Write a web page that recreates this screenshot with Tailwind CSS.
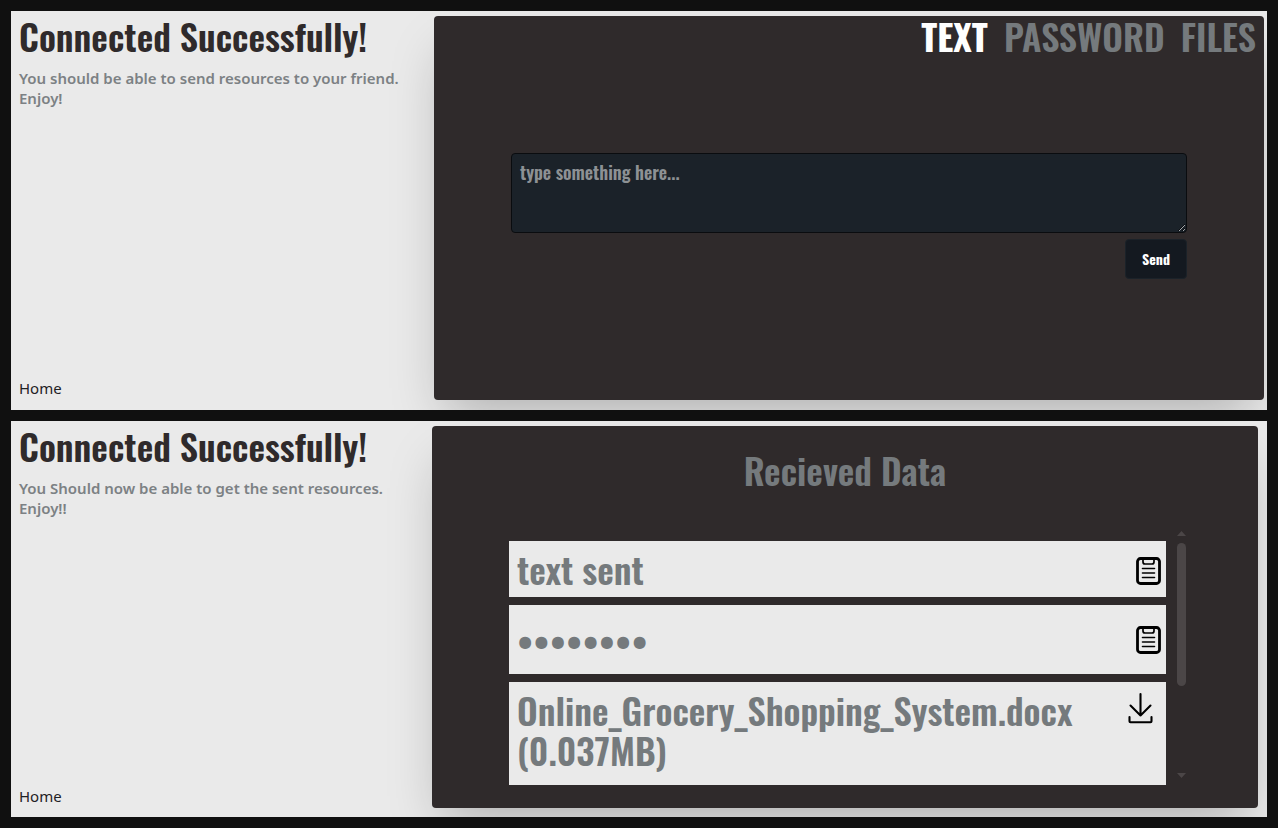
<!DOCTYPE html>
<html lang="en">
<head>
<meta charset="utf-8">
<meta name="viewport" content="width=device-width, initial-scale=1">
<title>Connected Successfully!</title>
<script src="https://cdn.jsdelivr.net/npm/@tailwindcss/browser@4"></script>
</head>
<body class="grid min-h-screen grid-rows-[399fr_396fr] gap-[11px] bg-[#101010] p-[11px] font-['Noto_Sans',sans-serif]">

<!-- Sender -->
<section class="grid grid-cols-[423fr_830fr] overflow-hidden bg-[#eaeaea] pt-[5px] pr-[3px] pb-[10px]">
  <div class="flex flex-col pl-2">
    <h1 class="font-['Oswald',sans-serif] text-4xl leading-10 font-semibold text-[#2f2a2b]">Connected Successfully!</h1>
    <p class="mt-3 text-[15px] leading-5 font-semibold text-[#7c8184]">You should be able to send resources to your friend.<br>Enjoy!</p>
    <a href="#" class="mt-auto self-start text-[15px] leading-6 text-[#1f2125]">Home</a>
  </div>
  <div class="flex flex-col rounded bg-[#2f2a2b] font-['Oswald',sans-serif] font-semibold shadow-2xl">
    <nav class="flex justify-end gap-4 px-2 text-4xl leading-10">
      <button type="button" class="font-bold text-white">TEXT</button>
      <button type="button" class="text-[#757a7d]">PASSWORD</button>
      <button type="button" class="text-[#757a7d]">FILES</button>
    </nav>
    <form class="flex flex-1 flex-col items-end px-[77px] pt-[97px]">
      <textarea aria-label="Text to send" placeholder="type something here..." class="block h-20 w-full rounded border border-[#0a0c0f] bg-[#1b2229] px-2 py-1 text-lg leading-7 text-white placeholder:text-[#8d9194]"></textarea>
      <button type="button" class="mt-1.5 h-10 rounded border border-[#1b2229] bg-[#141920] px-4 text-sm font-bold text-white">Send</button>
    </form>
  </div>
</section>

<!-- Receiver -->
<section class="grid grid-cols-[421fr_826fr] overflow-hidden bg-[#eaeaea] pt-[5px] pr-[9px] pb-[9px]">
  <div class="flex flex-col pl-2">
    <h1 class="font-['Oswald',sans-serif] text-4xl leading-10 font-semibold text-[#2f2a2b]">Connected Successfully!</h1>
    <p class="mt-3 text-[15px] leading-5 font-semibold text-[#7c8184]">You Should now be able to get the sent resources.<br>Enjoy!!</p>
    <a href="#" class="mt-auto self-start text-[15px] leading-6 text-[#1f2125]">Home</a>
  </div>
  <div class="flex flex-col rounded bg-[#2f2a2b] font-['Oswald',sans-serif] text-4xl leading-10 font-semibold text-[#757a7d] shadow-2xl">
    <h2 class="pt-6 text-center">Recieved Data</h2>
    <div class="mt-[39px] flex gap-2.5 pr-[72px] pl-[77px]">
      <ul class="flex flex-1 flex-col gap-2 pt-3">
        <li class="flex h-14 items-center justify-between bg-[#eaeaea] pr-[5px] pl-2">
          <span>text sent</span>
          <button type="button" aria-label="Copy text">
            <svg class="mt-1 block h-7 w-[25px]" viewBox="0 0 25 28" fill="none" stroke="#000" stroke-linecap="round"><rect x="1.5" y="1.5" width="22" height="25" rx="3" stroke-width="2.8"/><path d="M7 2v3a2 2 0 0 0 2 2h7a2 2 0 0 0 2-2V2" stroke-width="1.7"/><path d="M6.500 11.500h12M6.500 16h12M6.500 20.500h12" stroke-width="1.6"/></svg>
          </button>
        </li>
        <li class="flex h-[69px] items-center justify-between bg-[#eaeaea] pr-[5px] pl-2">
          <input type="password" readonly value="password" aria-label="Received password" class="w-60 bg-transparent">
          <button type="button" aria-label="Copy password">
            <svg class="block h-7 w-[25px]" viewBox="0 0 25 28" fill="none" stroke="#000" stroke-linecap="round"><rect x="1.5" y="1.5" width="22" height="25" rx="3" stroke-width="2.8"/><path d="M7 2v3a2 2 0 0 0 2 2h7a2 2 0 0 0 2-2V2" stroke-width="1.7"/><path d="M6.500 11.500h12M6.500 16h12M6.500 20.500h12" stroke-width="1.6"/></svg>
          </button>
        </li>
        <li class="flex items-start justify-between bg-[#eaeaea] pt-2 pr-[13px] pb-[15px] pl-2">
          <span>Online_Grocery_Shopping_System.docx<br>(0.037MB)</span>
          <button type="button" aria-label="Download file" class="pt-0.5">
            <svg class="block h-8 w-[25px]" viewBox="0 0 25 32" fill="none" stroke="#000" stroke-width="2.1" stroke-linecap="round" stroke-linejoin="round"><path d="M12.500 2v21.500M2.500 13.500l10 10 10-10M1.500 25v4.200q0 1 1 1h20q1 0 1-1V25"/></svg>
          </button>
        </li>
      </ul>
      <div class="flex w-2.5 flex-col items-center pb-[7px]" aria-hidden="true">
        <svg class="mt-0.5 h-[5px] w-[9px]" viewBox="0 0 9 5" fill="#4b4647"><path d="M0 5L4.500 0 9 5z"/></svg>
        <div class="mt-[7px] h-[143px] w-[9px] rounded-full bg-[#4b4647]"></div>
        <svg class="mt-auto h-[5px] w-[9px]" viewBox="0 0 9 5" fill="#4b4647"><path d="M0 0L4.500 5 9 0z"/></svg>
      </div>
    </div>
  </div>
</section>
</body>
</html>
